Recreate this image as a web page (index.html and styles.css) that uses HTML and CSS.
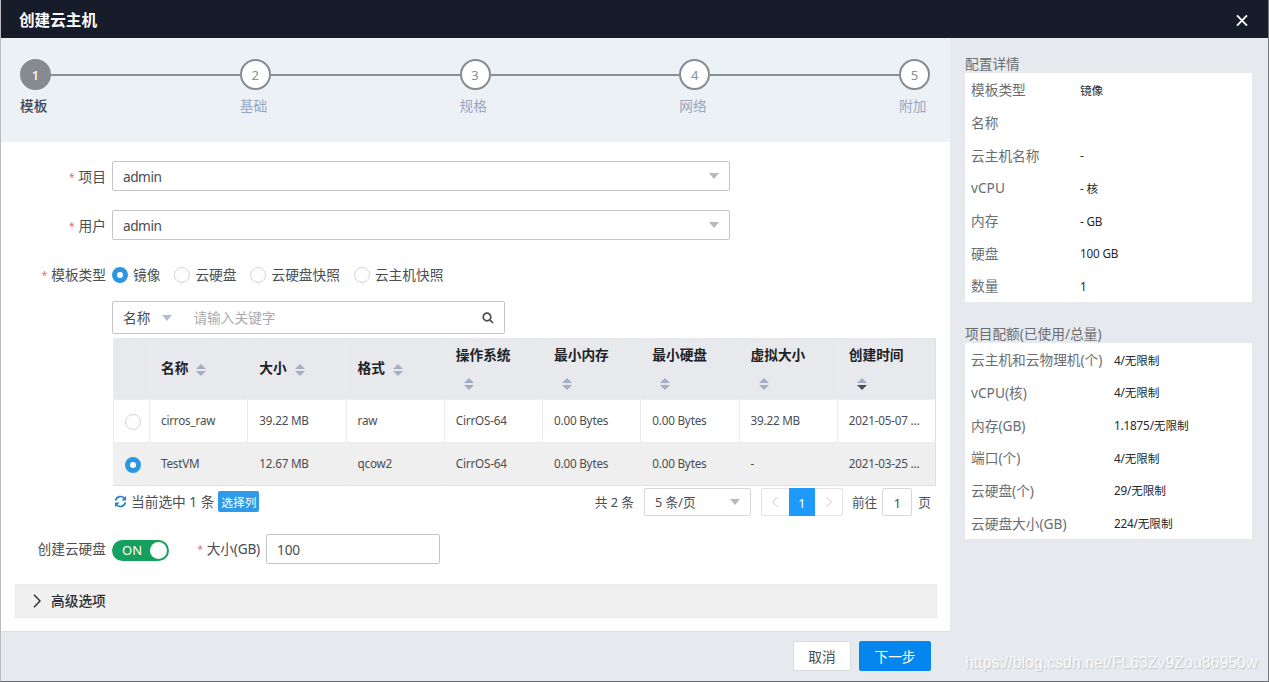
FILE: index.html
```html
<!DOCTYPE html>
<html lang="zh-CN">
<head>
    <meta charset="UTF-8">
    <meta name="viewport" content="width=device-width, initial-scale=1.0">
    <title>创建云主机</title>
    <link rel="stylesheet" href="styles.css">
</head>
<body>
<div class="dialog">
    <header class="dialog-header">
        <h1>创建云主机</h1>
        <svg class="close" viewBox="0 0 12 12"><path d="M1 0.8L11 11.2M11 0.8L1 11.2"/></svg>
    </header>

    <div class="dialog-body">
        <main class="main">
            <div class="steps">
                <div class="step active">
                    <div class="step-head"><span class="step-num">1</span><i class="step-line"></i></div>
                    <div class="step-title">模板</div>
                </div>
                <div class="step">
                    <div class="step-head"><span class="step-num">2</span><i class="step-line"></i></div>
                    <div class="step-title">基础</div>
                </div>
                <div class="step">
                    <div class="step-head"><span class="step-num">3</span><i class="step-line"></i></div>
                    <div class="step-title">规格</div>
                </div>
                <div class="step">
                    <div class="step-head"><span class="step-num">4</span><i class="step-line"></i></div>
                    <div class="step-title">网络</div>
                </div>
                <div class="step last">
                    <div class="step-head"><span class="step-num">5</span></div>
                    <div class="step-title">附加</div>
                </div>
            </div>

            <form class="form">
                <div class="form-row">
                    <label class="label"><em>*</em>项目</label>
                    <div class="select"><span>admin</span><i class="caret"></i></div>
                </div>
                <div class="form-row">
                    <label class="label"><em>*</em>用户</label>
                    <div class="select"><span>admin</span><i class="caret"></i></div>
                </div>
                <div class="form-row radios">
                    <label class="label"><em>*</em>模板类型</label>
                    <span class="radio-item"><i class="radio checked"></i>镜像</span>
                    <span class="radio-item"><i class="radio"></i>云硬盘</span>
                    <span class="radio-item"><i class="radio"></i>云硬盘快照</span>
                    <span class="radio-item"><i class="radio"></i>云主机快照</span>
                </div>

                <div class="search">
                    <span>名称</span>
                    <i class="caret blue"></i>
                    <span class="placeholder">请输入关键字</span>
                    <svg class="search-icon" viewBox="0 0 12 12"><circle cx="5" cy="5" r="3.8"/><path d="M7.8 7.8L11 11"/></svg>
                </div>

                <table class="table">
                    <colgroup><col class="col-radio"><col><col><col><col><col><col><col><col></colgroup>
                    <thead>
                        <tr>
                            <th></th>
                            <th>名称<i class="sort"></i></th>
                            <th>大小<i class="sort"></i></th>
                            <th>格式<i class="sort"></i></th>
                            <th class="wrap">操作系统<i class="sort"></i></th>
                            <th class="wrap">最小内存<i class="sort"></i></th>
                            <th class="wrap">最小硬盘<i class="sort"></i></th>
                            <th class="wrap">虚拟大小<i class="sort"></i></th>
                            <th class="wrap">创建时间<i class="sort desc"></i></th>
                        </tr>
                    </thead>
                    <tbody>
                        <tr>
                            <td><i class="radio"></i></td>
                            <td>cirros_raw</td>
                            <td>39.22 MB</td>
                            <td>raw</td>
                            <td>CirrOS-64</td>
                            <td>0.00 Bytes</td>
                            <td>0.00 Bytes</td>
                            <td>39.22 MB</td>
                            <td>2021-05-07 ...</td>
                        </tr>
                        <tr class="selected">
                            <td><i class="radio checked"></i></td>
                            <td>TestVM</td>
                            <td>12.67 MB</td>
                            <td>qcow2</td>
                            <td>CirrOS-64</td>
                            <td>0.00 Bytes</td>
                            <td>0.00 Bytes</td>
                            <td>-</td>
                            <td>2021-03-25 ...</td>
                        </tr>
                    </tbody>
                </table>

                <div class="table-footer">
                    <svg class="refresh" viewBox="0 0 14 14">
                        <path d="M1.8 6A5.2 5.2 0 0 1 11 3.6M12.2 8A5.2 5.2 0 0 1 3 10.4"/>
                        <path class="fill" d="M13 0.8V5.8H8ZM1 13.2V8.2H6Z"/>
                    </svg>
                    <span class="selected-count">当前选中 1 条</span>
                    <button type="button" class="btn-columns">选择列</button>
                    <div class="pagination">
                        <span class="total">共 2 条</span>
                        <div class="page-size">5 条/页<i class="caret"></i></div>
                        <div class="pager">
                            <span class="prev"><svg viewBox="0 0 8 12"><path d="M6.5 1L1.5 6L6.5 11"/></svg></span>
                            <span class="current">1</span>
                            <span class="next"><svg viewBox="0 0 8 12"><path d="M1.5 1L6.5 6L1.5 11"/></svg></span>
                        </div>
                        <span class="goto">前往</span>
                        <span class="page-input">1</span>
                        <span>页</span>
                    </div>
                </div>

                <div class="form-row disk-row">
                    <label class="label">创建云硬盘</label>
                    <div class="switch">ON<i></i></div>
                    <label class="size-label"><em>*</em>大小(GB)</label>
                    <div class="size-input">100</div>
                </div>

                <div class="advanced">
                    <svg viewBox="0 0 8 14"><path d="M1 0.8L7 7L1 13.2"/></svg>
                    <span>高级选项</span>
                </div>
            </form>

            <footer class="dialog-footer">
                <button class="btn">取消</button>
                <button class="btn btn-primary">下一步</button>
            </footer>
        </main>

        <aside class="sidebar">
            <h2>配置详情</h2>
            <dl class="detail">
                <dt>模板类型</dt><dd>镜像</dd>
                <dt>名称</dt><dd></dd>
                <dt>云主机名称</dt><dd>-</dd>
                <dt>vCPU</dt><dd>- 核</dd>
                <dt>内存</dt><dd>- GB</dd>
                <dt>硬盘</dt><dd>100 GB</dd>
                <dt>数量</dt><dd>1</dd>
            </dl>
            <h2>项目配额(已使用/总量)</h2>
            <dl class="detail quota">
                <dt>云主机和云物理机(个)</dt><dd>4/无限制</dd>
                <dt>vCPU(核)</dt><dd>4/无限制</dd>
                <dt>内存(GB)</dt><dd>1.1875/无限制</dd>
                <dt>端口(个)</dt><dd>4/无限制</dd>
                <dt>云硬盘(个)</dt><dd>29/无限制</dd>
                <dt>云硬盘大小(GB)</dt><dd>224/无限制</dd>
            </dl>
            <div class="watermark">https://blog.csdn.net/FL63Zv9Zou86950w</div>
        </aside>
    </div>
</div>
</body>
</html>
```
FILE: styles.css
```css
* {
    box-sizing: border-box;
}
body {
    margin: 0;
    font-family: "Noto Sans", "Noto Sans CJK SC", sans-serif;
    font-size: 13.7px;
    line-height: 20px;
    color: #4a4d52;
}
h1, h2, dl, dd {
    margin: 0;
}
i, em {
    font-style: normal;
}
svg {
    display: block;
    fill: none;
    stroke: currentColor;
}
.dialog {
    display: flex;
    flex-direction: column;
    width: 1269px;
    height: 682px;
    overflow: hidden;
    border-left: 1px solid #b9bbbf;
    border-right: 1px solid #74777d;
    border-bottom: 1px solid #6a6c72;
}
.dialog-header {
    display: flex;
    align-items: center;
    justify-content: space-between;
    height: 38px;
    padding: 2px 20px 0 18px;
    background: #171c2a;
    color: #fff;
}
.dialog-header h1 {
    font-size: 15.6px;
    font-weight: bold;
}
.close {
    width: 12px;
    height: 13px;
    stroke-width: 1.8;
}
.dialog-body {
    display: flex;
    flex: 1;
}
.main {
    display: flex;
    flex: none;
    flex-direction: column;
    width: 949px;
    background: #fff;
}

/* steps */
.steps {
    display: flex;
    height: 104px;
    padding: 21px 20px 0 19px;
    background: #ecf1f6;
}
.step {
    flex: 1;
    color: #98a6c2;
}
.step.last {
    flex: none;
    width: 31px;
}
.step-head {
    display: flex;
    align-items: center;
}
.step-num {
    width: 31px;
    height: 31px;
    border: 2px solid #868a91;
    border-radius: 50%;
    background: #fff;
    color: #8a8e96;
    font-size: 13px;
    line-height: 28px;
    text-align: center;
}
.step-line {
    flex: 1;
    height: 2px;
    background: #8a8e94;
}
.step-title {
    margin-top: 6px;
}
.step.active {
    color: #3f4856;
    font-weight: 500;
}
.active .step-num {
    background: #868a91;
    color: #fff;
}

/* form */
.form {
    flex: 1;
    padding-top: 19px;
}
.form-row {
    display: flex;
    align-items: center;
    height: 30px;
    margin-bottom: 19px;
}
.label {
    width: 105px;
    margin-right: 6px;
    padding-top: 1px;
    text-align: right;
}
em {
    margin-right: 4px;
    color: #e0706c;
    font-size: 10px;
    vertical-align: 1px;
}
.select {
    display: flex;
    align-items: center;
    justify-content: space-between;
    width: 618px;
    height: 30px;
    padding: 0 10px;
    border: 1px solid #c4c6c9;
    border-radius: 2px;
    letter-spacing: -0.5px;
}
.select span {
    padding-top: 2px;
}
.caret {
    border: 5px solid transparent;
    border-top: 6px solid #b6b8bb;
    border-bottom: 0;
}
.caret.blue {
    border-top-color: #b4bccd;
}
.radios {
    height: 31px;
    margin-bottom: 11px;
}
.radio-item {
    display: flex;
    align-items: center;
    margin-right: 14px;
}
.radio-item .radio {
    margin: 1px 5px 0 0;
}
.radio {
    display: block;
    width: 16px;
    height: 16px;
    border: 1px solid #d3d6da;
    border-radius: 50%;
    background: #fff;
}
.radio.checked {
    border: 5px solid #2c97e0;
}
.search {
    display: flex;
    align-items: center;
    width: 393px;
    height: 33px;
    margin-left: 111px;
    padding: 1px 10px 0;
    border: 1px solid #c4c6c9;
    border-radius: 2px;
}
.search .caret {
    margin: 0 21px 0 12px;
}
.placeholder {
    flex: 1;
    color: #a9abae;
}
.search-icon {
    width: 12px;
    height: 12px;
    stroke-width: 1.7;
}

/* image table */
.table {
    width: 823px;
    margin: 4px 0 0 112px;
    border-collapse: collapse;
    table-layout: fixed;
    border-right: 1px solid #dfe0e2;
    border-bottom: 1px solid #dfe0e2;
    font-size: 11.7px;
    white-space: nowrap;
}
.col-radio {
    width: 36px;
}
.table th, .table td {
    padding: 0 0 0 11px;
    border-left: 1px solid #ececee;
    text-align: left;
}
.table th {
    height: 61px;
    background: #e7e9ec;
    color: #202226;
    font-size: 13.7px;
    font-weight: bold;
}
.table td {
    height: 43px;
    padding-bottom: 1px;
    letter-spacing: -0.2px;
}
.table tbody tr {
    border-top: 1px solid #ececee;
}
.table tbody .selected {
    background: #efefef;
}
.selected td {
    border-left-color: #efefef;
}
.sort {
    display: inline-flex;
    flex-direction: column;
    gap: 2px;
    margin-left: 8px;
    vertical-align: middle;
}
.sort::before, .sort::after {
    content: "";
    border: 5px solid transparent;
}
.sort::before {
    border-top: 0;
    border-bottom-color: #a3aec2;
}
.sort::after {
    border-bottom: 0;
    border-top-color: #a3aec2;
}
.sort.desc::after {
    border-top-color: #4a4e58;
}
.table .wrap {
    padding-bottom: 3px;
}
.wrap .sort {
    display: flex;
    width: 10px;
    margin: 13px 0 -1px 8px;
}
.table td .radio {
    margin-top: 3px;
}

/* pagination */
.table-footer {
    display: flex;
    align-items: center;
    height: 30px;
    margin: 1px 19px 17px 113px;
}
.refresh {
    width: 13px;
    height: 13px;
    margin-right: 4px;
    color: #2b82c6;
    stroke-width: 1.8;
}
.refresh .fill {
    fill: currentColor;
    stroke: none;
}
.btn-columns {
    width: 41px;
    height: 21px;
    margin-left: 4px;
    padding: 0;
    border: 0;
    border-radius: 2px;
    background: #2e9ae8;
    color: #fff;
    font: 11.7px "Noto Sans CJK SC", sans-serif;
    line-height: 21px;
}
.pagination {
    display: flex;
    align-items: center;
    margin-left: auto;
    font-size: 12.7px;
}
.page-size {
    display: flex;
    align-items: center;
    justify-content: space-between;
    width: 107px;
    height: 28px;
    margin: 0 10px;
    padding: 0 10px;
    border: 1px solid #d6d8dc;
    border-radius: 2px;
}
.pager {
    display: flex;
    width: 82px;
    height: 28px;
    margin-right: 9px;
    border: 1px solid #e0e2e6;
    border-radius: 2px;
    color: #c4c8cf;
}
.pager span {
    display: flex;
    flex: 1;
    align-items: center;
    justify-content: center;
}
.pager svg {
    width: 8px;
    height: 12px;
}
.pager .current {
    margin: -1px 0;
    padding-top: 2px;
    background: #1e9bfa;
    color: #fff;
}
.page-input {
    width: 30px;
    height: 28px;
    margin: 0 6px 0 5px;
    border: 1px solid #d6d8dc;
    border-radius: 2px;
    line-height: 28px;
    text-align: center;
}

/* disk */
.disk-row {
    margin-bottom: 20px;
}
.switch {
    display: flex;
    align-items: center;
    justify-content: space-between;
    width: 57px;
    height: 21px;
    margin-top: 3px;
    padding: 0 2px 0 10px;
    border-radius: 11px;
    background: #16a05d;
    color: #fff;
    font-size: 13px;
}
.switch i {
    width: 17px;
    height: 17px;
    border-radius: 50%;
    background: #fff;
}
.size-label {
    width: 91px;
    margin-right: 6px;
    padding-top: 1px;
    letter-spacing: -0.2px;
    text-align: right;
}
.size-input {
    width: 174px;
    height: 30px;
    padding: 0 10px;
    border: 1px solid #c4c6c9;
    border-radius: 2px;
    letter-spacing: -0.2px;
    line-height: 30px;
}
.advanced {
    display: flex;
    align-items: center;
    gap: 10px;
    width: 922px;
    height: 34px;
    margin-left: 14px;
    padding: 0 0 0 17px;
    border: 1px solid #e9eaeb;
    background: #f0f0f0;
    color: #2c2e33;
    font-weight: 500;
}
.advanced svg {
    width: 8px;
    height: 14px;
    stroke-width: 1.4;
}
.dialog-footer {
    display: flex;
    justify-content: flex-end;
    gap: 8px;
    height: 50px;
    padding: 9px 19px 0 0;
    border-top: 1px solid #dcdfe3;
    background: #e6eaee;
}
.btn {
    width: 58px;
    height: 30px;
    padding: 0;
    border: 1px solid #d9dce0;
    border-radius: 2px;
    background: #fff;
    color: #4a4d52;
    font: 13.7px "Noto Sans CJK SC", sans-serif;
}
.btn-primary {
    width: 72px;
    border-color: #0486ee;
    background: #0486ee;
    color: #fff;
}

/* sidebar */
.sidebar {
    flex: 1;
    min-width: 0;
    padding: 16px 16px 0 15px;
    background: #e6e9ee;
}
.sidebar h2 {
    height: 19px;
    color: #6a6d72;
    font-size: 13.7px;
    font-weight: normal;
}
.detail {
    display: grid;
    grid-template-columns: 109px 1fr;
    grid-auto-rows: 32.7px;
    align-items: center;
    margin-bottom: 22px;
    padding-left: 6px;
    background: #fff;
}
.quota {
    grid-template-columns: 143px 1fr;
    margin-bottom: 112px;
}
.detail dt {
    padding-top: 2px;
    color: #6a6d72;
    white-space: nowrap;
}
.detail dd {
    padding-top: 1px;
    color: #26282c;
    font-size: 11.7px;
    letter-spacing: -0.15px;
}
.watermark {
    color: #f8f9fa;
    font: 15.9px/24px "Liberation Sans", Arial, sans-serif;
    text-shadow: 1px 1px 1px #bfc3c8;
    white-space: nowrap;
}
```
